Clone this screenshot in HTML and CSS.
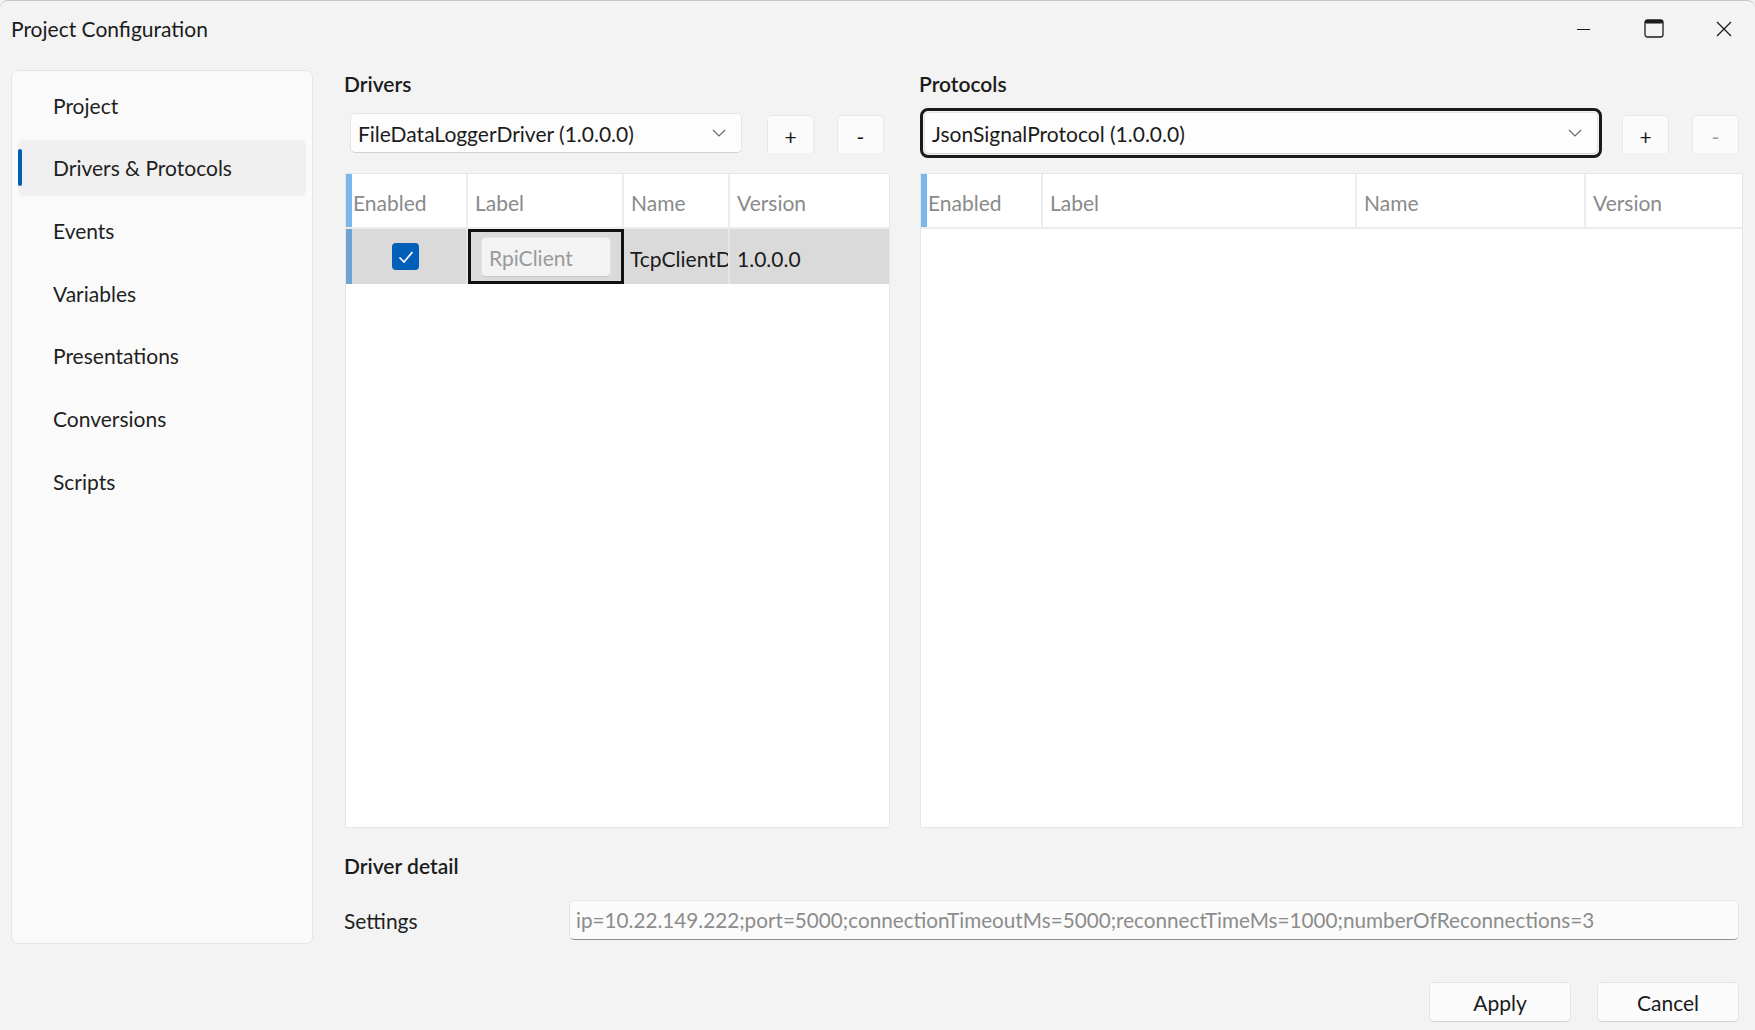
FILE: index.html
```html
<!DOCTYPE html>
<html lang="en">

<head>
    <meta charset="UTF-8">
    <meta name="viewport" content="width=device-width, initial-scale=1.0">
    <title>Project Configuration</title>
    <link rel="stylesheet" href="styles.css">
</head>

<body>
    <div class="window">
        <div class="titlebar">
            <span class="title">Project Configuration</span>
            <div class="caption-buttons">
                <div class="caption-btn">
                    <svg width="14" height="14" viewBox="0 0 14 14">
                        <line x1="0" y1="7.5" x2="13" y2="7.5" stroke="#1b1b1b" stroke-width="1.2" />
                    </svg>
                </div>
                <div class="caption-btn">
                    <svg width="20" height="19" viewBox="0 0 20 19">
                        <rect x="1" y="1" width="18" height="17" rx="2.5" fill="none" stroke="#1b1b1b" stroke-width="1.3" />
                        <rect x="1" y="1" width="18" height="3.5" rx="1.5" fill="#1b1b1b" />
                    </svg>
                </div>
                <div class="caption-btn">
                    <svg width="16" height="16" viewBox="0 0 16 16">
                        <path d="M1 1 L15 15 M15 1 L1 15" stroke="#1b1b1b" stroke-width="1.3" fill="none" />
                    </svg>
                </div>
            </div>
        </div>

        <div class="content">
            <nav class="sidebar">
                <div class="nav-item"><span class="accent"></span><span>Project</span></div>
                <div class="nav-item active"><span class="accent"></span><span>Drivers &amp; Protocols</span></div>
                <div class="nav-item"><span class="accent"></span><span>Events</span></div>
                <div class="nav-item"><span class="accent"></span><span>Variables</span></div>
                <div class="nav-item"><span class="accent"></span><span>Presentations</span></div>
                <div class="nav-item"><span class="accent"></span><span>Conversions</span></div>
                <div class="nav-item"><span class="accent"></span><span>Scripts</span></div>
            </nav>

            <main class="main">
                <div class="panels">
                    <!-- Drivers -->
                    <section class="panel">
                        <h2 class="section-title">Drivers</h2>
                        <div class="toolbar">
                            <div class="combo driver-combo">
                                <span>FileDataLoggerDriver (1.0.0.0)</span>
                                <svg class="chevron" width="14" height="8" viewBox="0 0 14 8">
                                    <polyline points="1,1 7,7 13,1" fill="none" stroke="#6b6b6b" stroke-width="1.2" />
                                </svg>
                            </div>
                            <button class="small-btn first">+</button>
                            <button class="small-btn">-</button>
                        </div>
                        <div class="grid drivers-grid">
                            <div class="grid-row header">
                                <div class="strip"></div>
                                <div class="cell first-col">Enabled</div>
                                <div class="cell">Label</div>
                                <div class="cell">Name</div>
                                <div class="cell last">Version</div>
                            </div>
                            <div class="grid-row selected">
                                <div class="strip"></div>
                                <div class="cell check-cell">
                                    <span class="checkbox">
                                        <svg width="20" height="20" viewBox="0 0 20 20">
                                            <polyline points="3.5,10.5 8,15 16.5,5" fill="none" stroke="#fff" stroke-width="1.7" />
                                        </svg>
                                    </span>
                                </div>
                                <div class="cell edit-cell">
                                    <div class="cell-input">RpiClient</div>
                                </div>
                                <div class="cell name-cell">TcpClientDriver</div>
                                <div class="cell last">1.0.0.0</div>
                            </div>
                        </div>
                    </section>

                    <!-- Protocols -->
                    <section class="panel">
                        <h2 class="section-title">Protocols</h2>
                        <div class="toolbar">
                            <div class="focus-ring">
                                <div class="combo protocol-combo">
                                    <span>JsonSignalProtocol (1.0.0.0)</span>
                                    <svg class="chevron" width="14" height="8" viewBox="0 0 14 8">
                                        <polyline points="1,1 7,7 13,1" fill="none" stroke="#6b6b6b" stroke-width="1.2" />
                                    </svg>
                                </div>
                            </div>
                            <button class="small-btn first-proto">+</button>
                            <button class="small-btn disabled">-</button>
                        </div>
                        <div class="grid protocols-grid">
                            <div class="grid-row header">
                                <div class="strip"></div>
                                <div class="cell first-col">Enabled</div>
                                <div class="cell">Label</div>
                                <div class="cell">Name</div>
                                <div class="cell last">Version</div>
                            </div>
                        </div>
                    </section>
                </div>

                <h2 class="section-title detail-title">Driver detail</h2>
                <div class="settings-row">
                    <label>Settings</label>
                    <div class="textbox">ip=10.22.149.222;port=5000;connectionTimeoutMs=5000;reconnectTimeMs=1000;numberOfReconnections=3</div>
                </div>
            </main>
        </div>

        <div class="footer">
            <button class="dialog-btn">Apply</button>
            <button class="dialog-btn">Cancel</button>
        </div>
    </div>
</body>

</html>
```

FILE: styles.css
```css
* {
    box-sizing: border-box;
}

body {
    margin: 0;
    font-family: Lato, "Noto Sans", sans-serif;
    font-size: 21px;
    color: #1f1f1f;
    background-color: #f3f3f3;
}

.window {
    width: 1755px;
    height: 1030px;
    background-color: #f3f3f3;
    border-top: 1px solid #c6c6c6;
    border-radius: 8px 8px 0 0;
    overflow: hidden;
    display: flex;
    flex-direction: column;
}

/* title bar */
.titlebar {
    height: 55px;
    display: flex;
    align-items: center;
    justify-content: space-between;
    flex-shrink: 0;
}

.title {
    margin-left: 11px;
    font-size: 21px;
    color: #1b1b1b;
}

.caption-buttons {
    display: flex;
    height: 100%;
    margin-right: -4px;
}

.caption-btn {
    width: 70px;
    height: 100%;
    display: flex;
    align-items: center;
    justify-content: center;
}

/* main area */
.content {
    display: flex;
    margin-top: 14px;
    height: 874px;
    flex-shrink: 0;
}

.sidebar {
    width: 302px;
    margin-left: 11px;
    background-color: #fafafa;
    border: 1px solid #e5e5e5;
    border-radius: 7px;
    padding: 6px 6px;
    display: flex;
    flex-direction: column;
    gap: 6.7px;
}

.nav-item {
    height: 56px;
    display: flex;
    align-items: center;
    border-radius: 5px;
    color: #1f1f1f;
}

.nav-item .accent {
    width: 4px;
    height: 37px;
    border-radius: 2px;
    margin-right: 31px;
}

.nav-item.active {
    background-color: #f0f0f0;
}

.nav-item.active .accent {
    background-color: #005fb8;
}

.main {
    margin-left: 32px;
    width: 1398px;
    display: flex;
    flex-direction: column;
}

.panels {
    display: grid;
    grid-template-columns: 545px 823px;
    column-gap: 30px;
}

.section-title {
    margin: 0 0 0 -1px;
    font-size: 21px;
    font-weight: 600;
    line-height: 28px;
    color: #1b1b1b;
}

.toolbar {
    margin-top: 10px;
    height: 50px;
    display: flex;
    align-items: center;
}

.combo {
    height: 40px;
    background-color: #fdfdfd;
    border: 1px solid #e5e5e5;
    border-bottom-color: #d2d2d2;
    border-radius: 5px;
    display: flex;
    align-items: center;
    justify-content: space-between;
    padding: 0 15px 0 7px;
    color: #1b1b1b;
}

.driver-combo {
    margin-left: 5px;
    width: 392px;
}

.focus-ring {
    width: 682px;
    height: 50px;
    border: 3px solid #1a1a1a;
    border-radius: 8px;
    padding: 1px;
}

.protocol-combo {
    height: 100%;
    width: 100%;
}

.small-btn {
    align-self: flex-start;
    margin-top: 7px;
    margin-left: 23px;
    width: 47px;
    height: 38px;
    background-color: #fbfbfb;
    border: 1px solid #e8e8e8;
    border-bottom: none;
    border-radius: 5px 5px 0 0;
    font-family: inherit;
    font-size: 21px;
    color: #1b1b1b;
    padding: 4px 0 0 0;
}

.small-btn.first {
    margin-left: 25px;
}

.small-btn.first-proto {
    margin-left: 20px;
}

.small-btn.disabled {
    color: #a0a0a0;
}

/* data grids */
.grid {
    margin-top: 15px;
    height: 655px;
    background-color: #ffffff;
    border: 1px solid #e6e6e6;
}

.drivers-grid .grid-row {
    grid-template-columns: 6px 116px 156px 106px 1fr;
}

.protocols-grid .grid-row {
    grid-template-columns: 6px 116px 314px 229px 1fr;
}

.grid-row {
    display: grid;
    height: 55px;
}

.grid-row .cell {
    display: flex;
    align-items: center;
    padding: 3px 0 0 7px;
    border-right: 2px solid #ededed;
    white-space: nowrap;
    overflow: hidden;
}

.grid-row .cell.last {
    border-right: none;
}

.grid-row .cell.first-col {
    padding-left: 1px;
}

.grid-row.header {
    border-bottom: 2px solid #ececec;
    color: #8a8a8a;
}

.grid-row.header .strip {
    background-color: #7ab7ec;
}

.grid-row.selected {
    background-color: #dadada;
    color: #1b1b1b;
}

.grid-row.selected .strip {
    background-color: #6fa3d4;
}

.grid-row.selected .cell {
    border-right-color: #e6e6e6;
}

.grid-row.selected .name-cell {
    padding-left: 6px;
}

.grid-row.selected .check-cell {
    justify-content: center;
    padding: 0;
}

.checkbox {
    width: 27px;
    height: 27px;
    border-radius: 4px;
    background-color: #005fb8;
    display: flex;
    align-items: center;
    justify-content: center;
    margin-right: 7px;
}

.grid-row.selected .edit-cell {
    border: 3px solid #111111;
    padding: 0 10px 0 10px;
}

.cell-input {
    width: 100%;
    height: 40px;
    background-color: #f3f3f3;
    border: 1px solid #e4e4e4;
    border-bottom-color: #c4c4c4;
    border-radius: 5px;
    display: flex;
    align-items: center;
    padding: 2px 0 0 7px;
    color: #9a9a9a;
}

/* detail */
.detail-title {
    margin-top: 24px;
}

.settings-row {
    margin-top: 20px;
    display: grid;
    grid-template-columns: 224px 1fr;
    align-items: center;
    margin-right: 4px;
}

.settings-row label {
    margin-left: -1px;
}

.textbox {
    height: 40px;
    background-color: #fbfbfb;
    border: 1px solid #e5e5e5;
    border-bottom-color: #8f8f8f;
    border-radius: 5px;
    display: flex;
    align-items: center;
    padding-left: 6px;
    font-size: 20.7px;
    color: #8c8c8c;
    white-space: nowrap;
    overflow: hidden;
}

/* footer */
.footer {
    display: flex;
    justify-content: flex-end;
    gap: 26px;
    padding: 38px 16px 0 0;
}

.dialog-btn {
    width: 142px;
    height: 40px;
    background-color: #fbfbfb;
    border: 1px solid #e5e5e5;
    border-bottom-color: #d0d0d0;
    border-radius: 5px;
    font-family: inherit;
    font-size: 21px;
    color: #1b1b1b;
}
```
